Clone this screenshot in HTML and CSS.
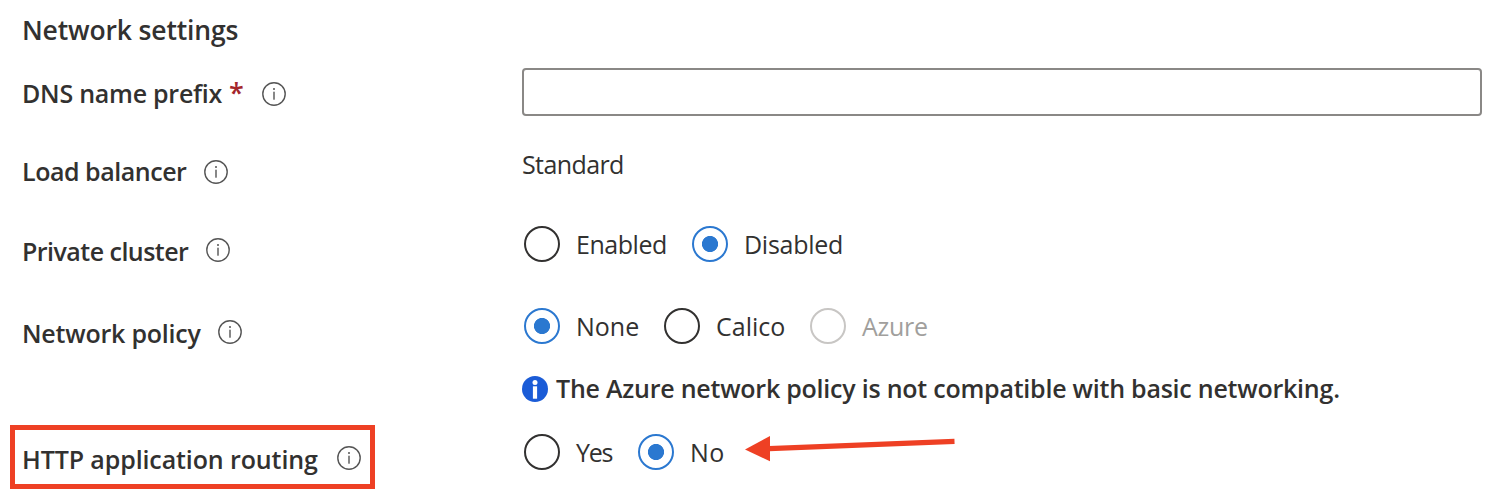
FILE: index.html
```html
<!DOCTYPE html>
<html lang="en">
<head>
<meta charset="utf-8">
<title>Network settings</title>
<link rel="stylesheet" href="styles.css">
</head>
<body>
<svg class="defs" width="0" height="0" aria-hidden="true">
  <symbol id="info" viewBox="0 0 24 24">
    <circle cx="12" cy="12" r="11.2" fill="none" stroke="#555" stroke-width="1.4"/>
    <rect x="11.3" y="9.7" width="1.4" height="8" fill="#555"/>
    <circle cx="12" cy="7.1" r="1" fill="#555"/>
  </symbol>
</svg>
<main class="form">
  <h1 class="heading"><span>Network settings</span></h1>
  <div class="row row-dns">
    <div class="label"><span class="t-dns">DNS name prefix</span><span class="required">*</span><svg class="info low"><use href="#info"/></svg></div>
    <input class="field" type="text" aria-label="DNS name prefix">
  </div>
  <div class="row row-lb">
    <div class="label"><span class="t-lb">Load balancer</span><svg class="info low"><use href="#info"/></svg></div>
    <div class="value"><span class="t-std">Standard</span></div>
  </div>
  <div class="row row-private">
    <div class="label"><span class="t-private">Private cluster</span><svg class="info"><use href="#info"/></svg></div>
    <div class="options">
      <div class="option w-enabled"><i class="radio"></i><span class="t-enabled">Enabled</span></div>
      <div class="option"><i class="radio on"></i><span class="t-disabled">Disabled</span></div>
    </div>
  </div>
  <div class="row row-policy">
    <div class="label"><span class="t-policy">Network policy</span><svg class="info"><use href="#info"/></svg></div>
    <div class="stack">
      <div class="options">
        <div class="option w-none"><i class="radio on"></i><span class="t-none">None</span></div>
        <div class="option w-calico"><i class="radio"></i><span class="t-calico">Calico</span></div>
        <div class="option disabled"><i class="radio"></i><span class="t-azure">Azure</span></div>
      </div>
      <div class="message">
        <svg class="badge" viewBox="0 0 26 26"><circle cx="13" cy="13" r="13" fill="#1b5cd7"/><circle cx="13" cy="6.6" r="2.5" fill="#fff"/><path d="M10.9 10.3h4.2v12.4h-4.2z" fill="#fff"/></svg>
        <span class="t-msg">The Azure network policy is not compatible with basic networking.</span>
      </div>
    </div>
  </div>
  <div class="row row-http">
    <div class="label"><span class="t-http">HTTP application routing</span><svg class="info"><use href="#info"/></svg></div>
    <div class="options">
      <div class="option w-yes"><i class="radio"></i><span class="t-yes">Yes</span></div>
      <div class="option"><i class="radio on"></i><span class="t-no">No</span></div>
    </div>
  </div>
  <div class="highlight"></div>
  <svg class="arrow" viewBox="0 0 212 28"><path d="M24 14.6 209.5 7.4" stroke="#ee4024" stroke-width="5.2"/><path d="M0 15.5 25 2v25.2z" fill="#ee4024"/></svg>
</main>
</body>
</html>
```
FILE: styles.css
```css
* { box-sizing: border-box; }
body {
  margin: 0;
  background: #fff;
  color: #323130;
  font: 400 25px/36px "Open Sans", "Noto Sans", sans-serif;
}
.defs { position: absolute; }
.form {
  position: relative;
  width: 1504px;
  height: 496px;
  padding: 12px 22px 0;
  overflow: hidden;
  white-space: nowrap;
}
.heading {
  height: 56px;
  margin: 0;
  font-size: 26.5px;
  font-weight: 650;
  letter-spacing: -0.15px;
}
.row {
  display: grid;
  grid-template-columns: 500px 960px;
  align-items: start;
}
.row-dns { height: 78px; }
.row-lb { height: 80px; }
.row-private { height: 82px; }
.row-policy { height: 126px; }
.label {
  display: flex;
  align-items: center;
  padding-top: 7px;
  font-weight: 600;
}
.required {
  width: 16px;
  margin-left: 7px;
  color: #a4262c;
  font-size: 27px;
  font-weight: 600;
}
.info {
  width: 24px;
  height: 24px;
  margin: -2px 0 0 17px;
}
.info.low { margin-top: 2px; }
.field {
  width: 960px;
  height: 48px;
  border: 2px solid #8a8886;
  border-radius: 4px;
  background: #fff;
}
.options { display: flex; padding-left: 2px; }
.option { display: flex; gap: 16px; height: 36px; }
.radio {
  width: 36px;
  height: 36px;
  flex: none;
  border: 2px solid #323130;
  border-radius: 50%;
}
.radio.on {
  border-color: #2b78d0;
  background: radial-gradient(circle, #2b78d0 7.7px, transparent 8.4px);
}
.disabled { color: #a19f9d; }
.disabled .radio { border-color: #c8c6c4; }
.w-enabled { width: 168px; }
.w-none { width: 140px; }
.w-calico { width: 146px; }
.w-yes { width: 114px; }
.message {
  display: flex;
  align-items: center;
  gap: 8px;
  height: 36px;
  margin-top: 26px;
  font-weight: 600;
}
.badge { width: 26px; height: 26px; margin-top: 2px; }
.t-dns { letter-spacing: -0.25px; }
.t-lb { margin-right: 1px; letter-spacing: -0.46px; }
.t-private { margin-right: 1px; letter-spacing: -0.53px; }
.t-policy { letter-spacing: -0.21px; }
.t-http { margin-right: 2px; letter-spacing: -0.11px; }
.t-std { letter-spacing: -0.6px; }
.t-enabled { letter-spacing: -0.45px; }
.t-disabled { letter-spacing: -0.28px; }
.t-azure { letter-spacing: -0.25px; }
.t-msg { letter-spacing: -0.23px; }
.t-yes { letter-spacing: -1.3px; }
.t-no { letter-spacing: 0.5px; }
.highlight {
  position: absolute;
  left: 10px;
  top: 425px;
  width: 365px;
  height: 64px;
  border: 5px solid #ee4024;
}
.arrow {
  position: absolute;
  left: 745px;
  top: 434px;
  width: 212px;
  height: 28px;
}
```
